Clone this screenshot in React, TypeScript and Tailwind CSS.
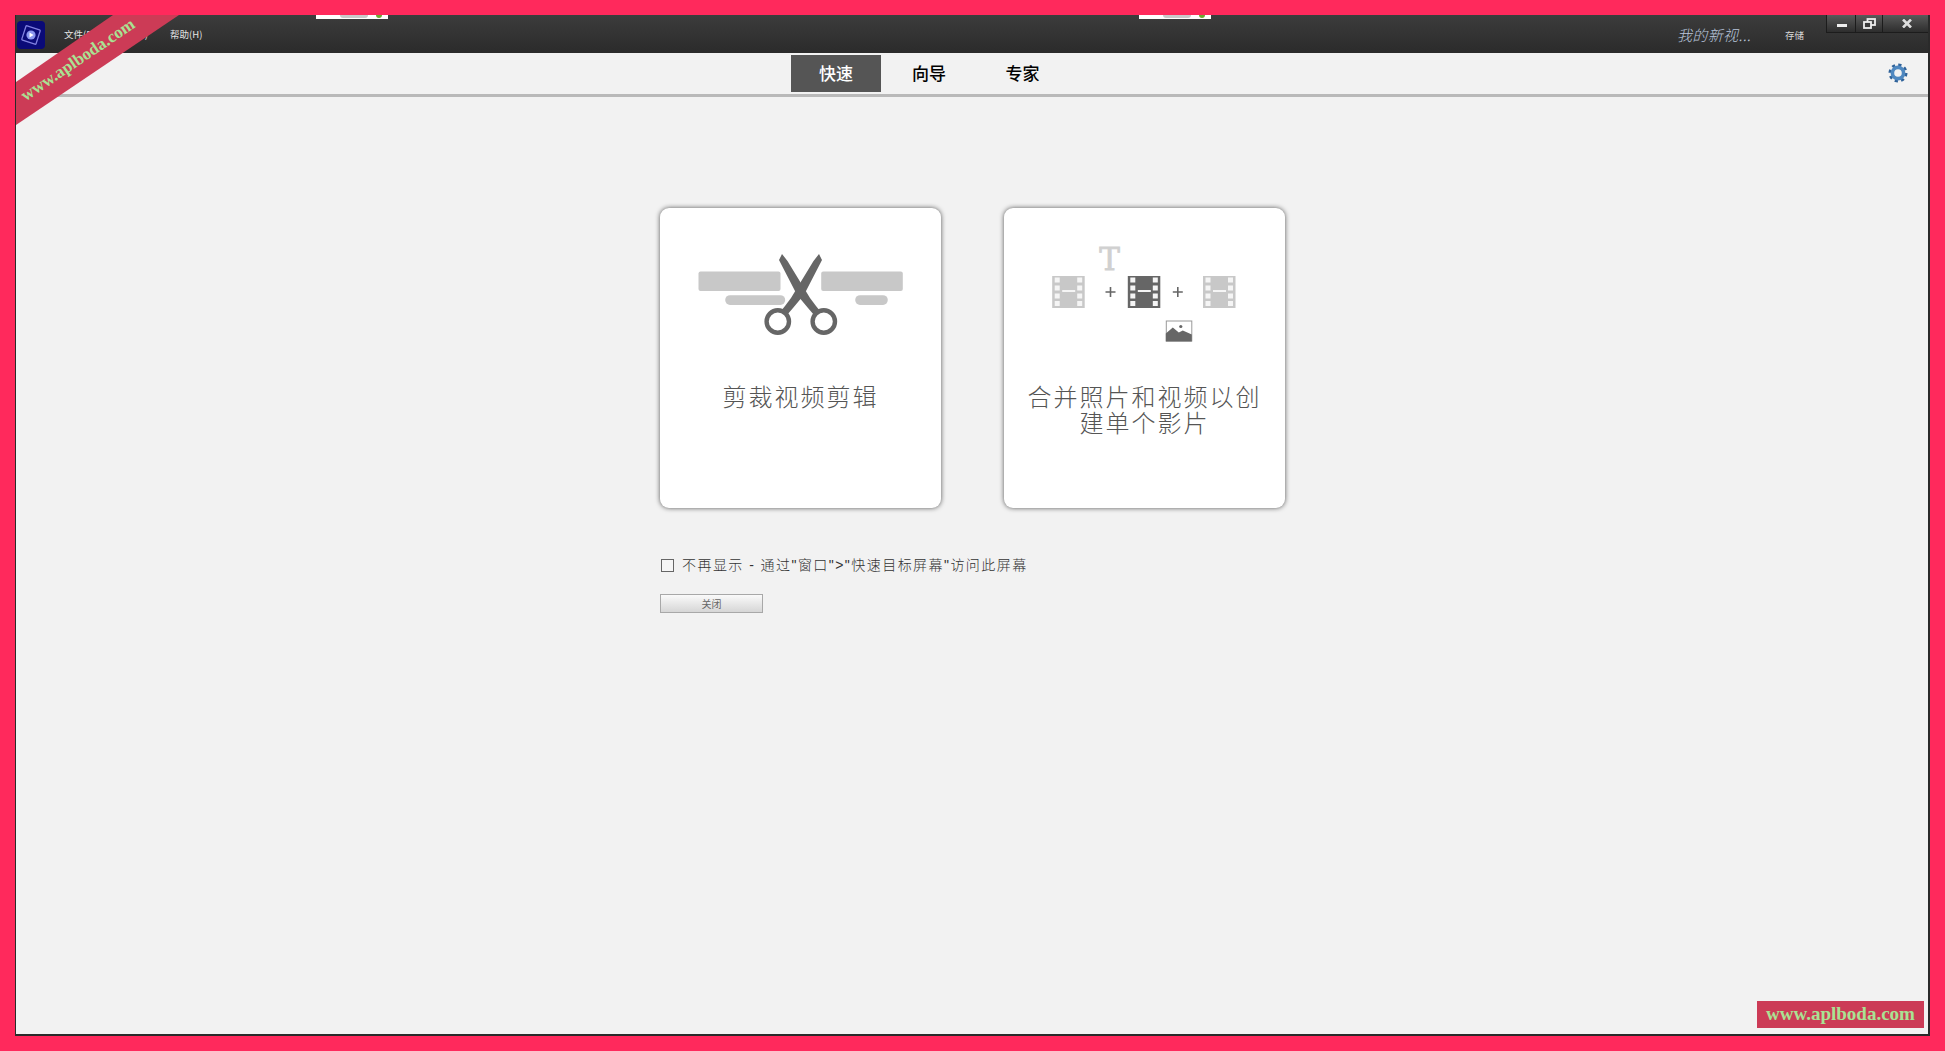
import React from "react";

const cjk = { fontFamily: '"Noto Sans CJK SC", "Liberation Sans", sans-serif' };

const Film = ({ x, color }: { x: number; color: string }) => {
  const holes = [1.5, 9.5, 17.5, 25];
  return (
    <g transform={`translate(${x} 68)`}>
      <rect width="32.5" height="32" fill={color} />
      {holes.map((y) => (
        <g key={y} fill="#f5f5f5">
          <rect x="2.5" y={y} width="5" height="5" />
          <rect x="25" y={y} width="5" height="5" />
        </g>
      ))}
      <rect x="10" y="14" width="13" height="2" fill="#f5f5f5" />
    </g>
  );
};

const ScissorsIcon = () => (
  <svg width="281" height="130" viewBox="0 0 281 130" className="block">
    <rect x="38.5" y="63.5" width="82" height="19.4" rx="2" fill="#c8c8c8" />
    <rect x="65.2" y="87.2" width="60" height="9.7" rx="4.8" fill="#c8c8c8" />
    <rect x="161.2" y="63.5" width="81.6" height="19.4" rx="2" fill="#c8c8c8" />
    <rect x="195.2" y="87.2" width="32.6" height="9.7" rx="4.8" fill="#c8c8c8" />
    <g fill="#666666">
      <path d="M122 46 L127.5 53 L150 90 L156 98 L160 103 L154 107 L148 100 L140.5 91 L135 83 L119 52 Z" />
      <path d="M159 46 L153.5 53 L131 90 L125 98 L121 103 L127 107 L133 100 L140.5 91 L146 83 L162 52 Z" />
    </g>
    <circle cx="117.8" cy="113.5" r="11.2" fill="#ffffff" stroke="#666666" strokeWidth="4.4" />
    <circle cx="163.8" cy="113.5" r="11.2" fill="#ffffff" stroke="#666666" strokeWidth="4.4" />
  </svg>
);

const MergeIcon = () => (
  <svg width="281" height="140" viewBox="0 0 281 140" className="block">
    <text x="105.5" y="62" textAnchor="middle" fontFamily='"DejaVu Serif", serif' fontWeight="400" fontSize="31" stroke="#d0d0d0" strokeWidth="0.8" fill="#d0d0d0">
      T
    </text>
    <Film x={48.2} color="#c8c8c8" />
    <Film x={123.8} color="#666666" />
    <Film x={199} color="#c8c8c8" />
    <path d="M106.5 79 V89 M101.5 84 H111.5 M173.8 79 V89 M168.8 84 H178.8" stroke="#666666" strokeWidth="1.6" />
    <g transform="translate(161.8 112.5)">
      <rect x="0.5" y="0.5" width="25.5" height="20" fill="#ffffff" stroke="#999999" />
      <path d="M0 21 V13 L7 7 L13 12 L17 10 L26 14 V21 Z" fill="#666666" />
      <circle cx="15" cy="6" r="1.6" fill="#666666" />
    </g>
  </svg>
);

const Gear = () => (
  <svg width="20" height="20" viewBox="0 0 20 20" className="block">
    <circle cx="10" cy="10" r="8.2" fill="none" stroke="#2f6299" strokeWidth="2.6" strokeDasharray="3.2 3.24" />
    <circle cx="10" cy="10" r="5.6" fill="none" stroke="#4f88c0" strokeWidth="3.6" />
  </svg>
);

const Logo = () => (
  <div className="w-7 h-7 rounded bg-[#0a0a78] flex items-center justify-center">
    <svg width="24" height="24" viewBox="0 0 24 24">
      <rect x="4.5" y="4.5" width="15" height="15" rx="1" transform="rotate(18 12 12)" fill="none" stroke="#8080e0" strokeWidth="1.3" />
      <circle cx="12" cy="12" r="4.6" fill="#8a96ee" />
      <path d="M10.5 9.6 L14.6 12 L10.5 14.4 Z" fill="#ffffff" />
    </svg>
  </div>
);

const WindowButtons = () => (
  <div className="absolute right-0 top-0 flex h-[18px] border-b border-l border-[#1c1c1c] bg-gradient-to-b from-[#5a5a5a] to-[#2e2e2e]">
    <div className="w-[29px] pl-[2px] flex items-center justify-center border-r border-[#1c1c1c]">
      <div className="w-[10px] h-[3px] mt-[3px] bg-[#eeeeee]" />
    </div>
    <div className="w-[27px] flex items-center justify-center border-r border-[#1c1c1c]">
      <svg width="13" height="11" viewBox="0 0 13 11">
        <rect x="4.5" y="1" width="7.5" height="6" fill="none" stroke="#eeeeee" strokeWidth="1.8" />
        <rect x="1" y="4" width="7" height="6" fill="#3a3a3a" stroke="#eeeeee" strokeWidth="1.8" />
      </svg>
    </div>
    <div className="w-[45px] pl-[3px] flex items-center justify-center">
      <svg width="10" height="9" viewBox="0 0 10 9">
        <path d="M1 0.5 L9 8.5 M9 0.5 L1 8.5" stroke="#dddddd" strokeWidth="2.6" />
      </svg>
    </div>
  </div>
);

const TopSliver = ({ left }: { left: string }) => (
  <div className={`absolute top-0 h-1 w-[72px] bg-white flex justify-center ${left}`}>
    <div className="w-7 h-[3px] ml-1 rounded-b-full bg-[#c8c8c8]" />
    <div className="absolute right-[6px] top-0 w-[6px] h-[3px] rounded-b-full bg-[#6aa82e]" />
  </div>
);

const Card = ({ icon, children }: { icon: React.ReactNode; children: React.ReactNode }) => (
  <div className="w-[281px] h-[300px] bg-white rounded-[9px] shadow-[0_0_5px_rgba(0,0,0,0.65)] flex flex-col items-center">
    <div className="h-[175px]">{icon}</div>
    <div className="text-[24px] leading-[26px] font-light text-[#555555] text-center tracking-[2px] w-[240px]">
      {children}
    </div>
  </div>
);

export default function App() {
  return (
    <div className="w-[1945px] h-[1051px] bg-[#ff295c] pl-[15px] pr-[15px] pt-[15px] pb-[15px] overflow-hidden" style={cjk}>
      <div className="relative w-full h-full overflow-hidden bg-[#f2f2f2] flex flex-col border-l border-r-2 border-b-2 border-[#2a2a2a]">
        {/* title bar */}
        <div className="relative h-[38px] shrink-0 bg-gradient-to-b from-[#3c3c3c] to-[#2b2b2b] flex items-center text-[#e4e4e4]">
          <div className="ml-[1px] mt-[1px]">
            <Logo />
          </div>
          <div className="ml-[19px] flex gap-[20px] text-[9.5px] leading-none mt-[2px]">
            <span className="w-[33px] whitespace-nowrap">文件(F)</span>
            <span className="w-[33px] whitespace-nowrap">编辑(E)</span>
            <span className="w-[33px] whitespace-nowrap">帮助(H)</span>
          </div>
          <div className="ml-auto mr-[124px] flex items-center gap-[34px] mt-[2px]">
            <span className="italic text-[15px] font-light text-[#b9c6dc] tracking-[0.4px] whitespace-nowrap">我的新视...</span>
            <span className="text-[9.5px] text-[#d8d8d8] whitespace-nowrap">存储</span>
          </div>
          <TopSliver left="left-[300px]" />
          <TopSliver left="left-[1123px]" />
          <WindowButtons />
        </div>

        {/* tab bar */}
        <div className="h-[44px] shrink-0 border-b-[3px] border-[#b9b9b9] bg-[#f2f2f2] flex items-start relative">
          <div className="ml-[775px] mt-[2px] flex text-[17px] font-medium text-black">
            <div className="w-[90px] h-[37px] pb-[2px] bg-[#555555] text-white flex items-center justify-center">快速</div>
            <div className="w-[96px] h-[37px] pb-[2px] flex items-center justify-center">向导</div>
            <div className="w-[91px] h-[37px] pb-[2px] flex items-center justify-center">专家</div>
          </div>
          <div className="ml-auto mt-[10px] mr-[20px]">
            <Gear />
          </div>
        </div>

        {/* quick start */}
        <div className="flex-1 pl-[644px] pt-[111px]">
          <div className="flex gap-[63px]">
            <Card icon={<ScissorsIcon />}>剪裁视频剪辑</Card>
            <Card icon={<MergeIcon />}>合并照片和视频以创建单个影片</Card>
          </div>
          <label
            className="mt-[47px] flex items-center gap-[8px] text-[14px] leading-5 text-[#333333] font-light tracking-[1.45px]"
            style={{ fontFamily: '"Liberation Sans", "Noto Sans CJK SC", sans-serif' }}
          >
            <span className="ml-[1px] w-[13px] h-[13px] border border-[#666666] bg-[#f6f6f6] block" />
            <span className="whitespace-nowrap">不再显示 - 通过"窗口"&gt;"快速目标屏幕"访问此屏幕</span>
          </label>
          <button className="mt-[19px] w-[103px] h-[19px] border border-[#a8a8a8] bg-gradient-to-b from-[#fafafa] to-[#d6d6d6] text-[10px] leading-none text-[#666666] block">
            关闭
          </button>
        </div>

        {/* watermarks */}
        <div className="absolute left-0 top-0 w-[163px] h-[110px] bg-[#cc3b56] [clip-path:polygon(0_67px,97px_0,163px_0,0_110px)]" />
        <div
          className="absolute left-[-5px] top-[33px] w-[134px] text-center text-[17px] leading-6 font-bold text-[#a9e293] -rotate-[34deg] whitespace-nowrap"
          style={{ fontFamily: '"Liberation Serif", serif' }}
        >
          www.aplboda.com
        </div>
        <div
          className="absolute right-[4px] bottom-[6px] w-[167px] h-[27px] bg-[#cc3b56] text-[19px] leading-[25px] font-bold text-[#a9e293] text-center"
          style={{ fontFamily: '"Liberation Serif", serif' }}
        >
          www.aplboda.com
        </div>
      </div>
    </div>
  );
}
